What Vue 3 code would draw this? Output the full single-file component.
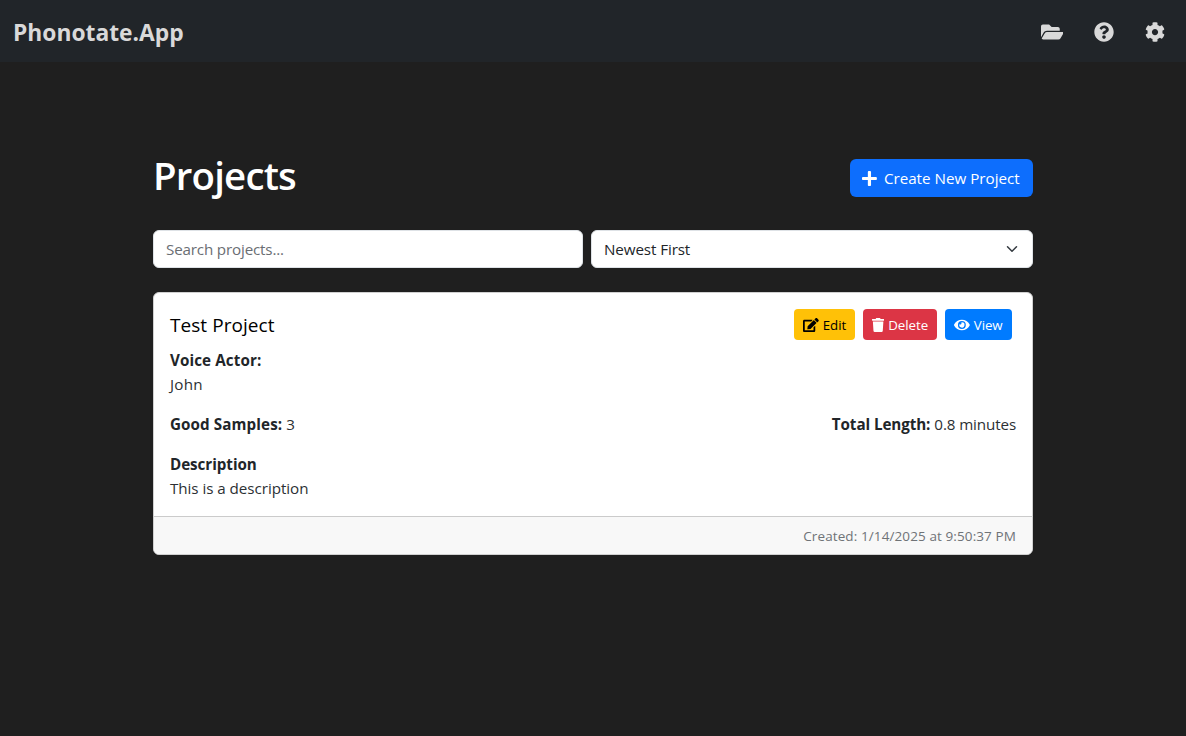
<script setup>
import { ref } from 'vue'

const query = ref('')
const icons = {
  folder: { w: 576, d: 'M572.694 292.093L500.27 416.248A63.997 63.997 0 0 1 444.989 448H45.025c-18.523 0-30.064-20.093-20.731-36.093l72.424-124.155A64 64 0 0 1 152 256h399.964c18.523 0 30.064 20.093 20.73 36.093zM152 224h328v-48c0-26.51-21.49-48-48-48H272l-64-64H48C21.49 64 0 85.49 0 112v278.046l69.077-118.418C86.214 242.25 117.989 224 152 224z' },
  help: { w: 512, d: 'M504 256c0 136.997-111.043 248-248 248S8 392.997 8 256C8 119.083 119.043 8 256 8s248 111.083 248 248zM262.655 90c-54.497 0-89.255 22.957-116.549 63.758-3.536 5.286-2.353 12.415 2.715 16.258l34.699 26.31c5.205 3.947 12.621 3.008 16.665-2.122 17.864-22.658 30.113-35.797 57.303-35.797 20.429 0 45.698 13.148 45.698 32.958 0 14.976-12.363 22.667-32.534 33.976C247.128 238.528 216 254.941 216 296v4c0 6.627 5.373 12 12 12h56c6.627 0 12-5.373 12-12v-1.333c0-28.462 83.186-29.647 83.186-106.667 0-58.002-60.165-102-116.531-102zM256 338c-25.365 0-46 20.635-46 46 0 25.364 20.635 46 46 46s46-20.636 46-46c0-25.365-20.635-46-46-46z' },
  gear: { w: 512, d: 'M487.4 315.7l-42.6-24.6c4.3-23.2 4.3-47 0-70.2l42.6-24.6c4.9-2.8 7.1-8.6 5.5-14-11.1-35.6-30-67.8-54.7-94.6-3.8-4.1-10-5.1-14.8-2.3L380.8 110c-17.9-15.4-38.5-27.3-60.8-35.1V25.800c0-5.600-3.900-10.500-9.400-11.700-36.700-8.200-74.300-7.800-109.200 0-5.500 1.200-9.400 6.100-9.400 11.700V75c-22.200 7.900-42.800 19.800-60.800 35.100L88.700 85.500c-4.900-2.800-11-1.900-14.800 2.300-24.700 26.700-43.600 58.900-54.700 94.600-1.700 5.400.6 11.200 5.500 14L67.300 221c-4.300 23.200-4.300 47 0 70.200l-42.600 24.600c-4.900 2.800-7.100 8.600-5.500 14 11.100 35.600 30 67.800 54.700 94.600 3.800 4.100 10 5.100 14.800 2.300l42.600-24.600c17.900 15.400 38.500 27.300 60.800 35.100v49.200c0 5.600 3.900 10.500 9.400 11.700 36.700 8.200 74.300 7.800 109.200 0 5.500-1.200 9.400-6.100 9.400-11.700v-49.200c22.200-7.900 42.800-19.800 60.800-35.100l42.600 24.600c4.900 2.800 11 1.900 14.800-2.300 24.700-26.700 43.600-58.900 54.700-94.600 1.500-5.500-.7-11.300-5.600-14.100zM256 336c-44.100 0-80-35.900-80-80s35.900-80 80-80 80 35.900 80 80-35.900 80-80 80z' },
  plus: { w: 448, d: 'M416 208H272V64c0-17.670-14.330-32-32-32h-32c-17.670 0-32 14.330-32 32v144H32c-17.670 0-32 14.330-32 32v32c0 17.670 14.330 32 32 32h144v144c0 17.670 14.330 32 32 32h32c17.670 0 32-14.330 32-32V304h144c17.670 0 32-14.330 32-32v-32c0-17.670-14.330-32-32-32z' },
  edit: { w: 576, d: 'M402.600 83.200l90.200 90.200c3.800 3.800 3.800 10 0 13.800L274.400 405.600l-92.800 10.300c-12.400 1.400-22.900-9.100-21.500-21.500l10.300-92.800L388.800 83.200c3.800-3.800 10-3.800 13.800 0zm162-22.900l-48.800-48.800c-15.200-15.200-39.900-15.200-55.200 0l-35.400 35.400c-3.800 3.800-3.800 10 0 13.800l90.200 90.200c3.800 3.800 10 3.800 13.800 0l35.400-35.400c15.200-15.300 15.200-40 0-55.200zM384 346.200V448H64V128h229.800c3.200 0 6.200-1.300 8.500-3.500l40-40c7.600-7.600 2.200-20.500-8.500-20.500H48C21.500 64 0 85.500 0 112v352c0 26.500 21.500 48 48 48h352c26.500 0 48-21.500 48-48V306.200c0-10.700-12.900-16-20.500-8.500l-40 40c-2.200 2.300-3.500 5.300-3.500 8.500z' },
  trash: { w: 448, d: 'M432 32H312l-9.400-18.700A24 24 0 0 0 281.100 0H166.800a23.720 23.720 0 0 0-21.400 13.300L136 32H16A16 16 0 0 0 0 48v32a16 16 0 0 0 16 16h416a16 16 0 0 0 16-16V48a16 16 0 0 0-16-16zM53.200 467a48 48 0 0 0 47.900 45h245.800a48 48 0 0 0 47.900-45L416 128H32z' },
  eye: { w: 576, d: 'M572.520 241.400C518.290 135.590 410.930 64 288 64S57.680 135.640 3.480 241.410a32.350 32.350 0 0 0 0 29.190C57.710 376.410 165.070 448 288 448s230.320-71.640 284.520-177.410a32.350 32.350 0 0 0 0-29.190zM288 400a144 144 0 1 1 144-144 143.930 143.930 0 0 1-144 144zm0-240a95.310 95.310 0 0 0-25.310 3.790 47.850 47.850 0 0 1-66.900 66.900A95.780 95.780 0 1 0 288 160z' },
}
const nav = ['folder', 'help', 'gear']
const actions = [
  { label: 'Edit', icon: 'edit' },
  { label: 'Delete', icon: 'trash' },
  { label: 'View', icon: 'eye' },
]
const project = {
  name: 'Test Project', actor: 'John', samples: 3, minutes: '0.8',
  description: 'This is a description', created: '1/14/2025 at 9:50:37 PM',
}
</script>

<template>
  <div class="page">
    <header class="navbar">
      <a class="brand"><span>Phonotate.App</span></a>
      <nav class="nav">
        <a v-for="n in nav" :key="n" :class="['nav-link', n]">
          <svg :viewBox="`0 0 ${icons[n].w} 512`"><path :d="icons[n].d" /></svg>
        </a>
      </nav>
    </header>
    <main class="container">
      <div class="heading">
        <h1>Projects</h1>
        <button class="create">
          <svg viewBox="0 0 448 512"><path :d="icons.plus.d" /></svg>
          <span>Create New Project</span>
        </button>
      </div>
      <div class="filters">
        <input v-model="query" class="search" placeholder="Search projects..." />
        <div class="select">
          <span>Newest First</span>
          <svg viewBox="0 0 16 16"><path d="m2 5 6 6 6-6" /></svg>
        </div>
      </div>
      <article class="card">
        <div class="card-body">
          <div class="card-top">
            <h5>{{ project.name }}</h5>
            <div class="actions">
              <button v-for="a in actions" :key="a.label" :class="['btn', a.icon]">
                <svg :viewBox="`0 0 ${icons[a.icon].w} 512`"><path :d="icons[a.icon].d" /></svg>
                <span>{{ a.label }}</span>
              </button>
            </div>
          </div>
          <p><b>Voice Actor:</b><br /><span class="actor">{{ project.actor }}</span></p>
          <div class="stats">
            <p><b>Good Samples:</b> <span>{{ project.samples }}</span></p>
            <p><b class="length">Total Length:</b> <span class="minutes">{{ project.minutes }} minutes</span></p>
          </div>
          <p><b class="desc">Description</b><br /><span class="about">{{ project.description }}</span></p>
        </div>
        <footer><span>Created: {{ project.created }}</span></footer>
      </article>
    </main>
  </div>
</template>

<style>
body { margin: 0; background: #1f1f1f; }
</style>

<style scoped>
* { box-sizing: border-box; }
.page {
  height: 736px;
  overflow: hidden;
  background: #1f1f1f;
  color: #212529;
  font: 400 15.2px/24px "Open Sans", "Noto Sans", sans-serif;
}
svg { display: block; fill: currentColor; flex: none; }
h1, h5, p { margin: 0; }
button { border: 0; font: inherit; display: flex; align-items: center; white-space: nowrap; }
.navbar {
  height: 62px;
  display: flex;
  align-items: center;
  justify-content: space-between;
  padding: 2px 21px 0 13px;
  background: #212529;
  color: #d9d9d9;
}
.brand { padding-top: 2px; font-size: 22.8px; line-height: 36px; font-weight: 700; }
.nav { display: flex; align-items: center; }
.nav-link svg { height: 20px; }
.folder { margin-right: 31px; }
.help { margin-right: 31px; }
.container { width: 880px; margin: 0 auto; padding-top: 91px; }
.heading { display: flex; justify-content: space-between; height: 77px; }
h1 { color: #fff; font-size: 38.4px; line-height: 44px; font-weight: 600; letter-spacing: -0.8px; }
.create {
  width: 183px;
  height: 38px;
  margin-top: 6px;
  padding: 0 0 0 12px;
  border-radius: 6px;
  background: #0d6efd;
  color: #fff;
}
.create svg { height: 17px; margin-right: 7px; }
.filters { display: grid; grid-template-columns: 430px 442px; gap: 8px; height: 38px; }
.search, .select {
  height: 38px;
  border: 1px solid #dee2e6;
  border-radius: 6px;
  background: #fff;
  font: inherit;
  padding: 0 12px;
  color: #212529;
}
.search { letter-spacing: -0.17px; }
.search::placeholder { color: #6a6e73; opacity: 1; }
.select { display: flex; align-items: center; justify-content: space-between; letter-spacing: -0.1px; }
.select svg { width: 16px; height: 12px; fill: none; stroke: #343a40; stroke-width: 2; stroke-linecap: round; stroke-linejoin: round; }
.card { margin-top: 24px; border: 1px solid #d0d0d0; border-radius: 6px; background: #fff; overflow: hidden; height: 263px; }
.card-body { padding: 16px; height: 223px; }
.card-top { display: flex; justify-content: space-between; height: 39px; }
h5 { color: #000; font-size: 19px; line-height: 33px; font-weight: 500; letter-spacing: 0.05px; }
.actions { display: flex; gap: 8px; padding-right: 4px; }
.btn { height: 31px; padding: 0 0 0 9px; border-radius: 4px; font-size: 13.3px; color: #fff; }
.btn svg { height: 14px; }
.btn.edit { width: 61px; background: #ffc107; color: #000; }
.btn.trash { width: 74px; background: #dc3545; }
.btn.eye { width: 67px; background: #007bff; }
.btn span { margin-left: 4px; letter-spacing: -0.05px; }
p { margin-bottom: 16px; color: #2c3034; }
b { color: #212529; font-weight: 700; letter-spacing: 0.1px; }
.desc { letter-spacing: -0.05px; }
.length { letter-spacing: -0.08px; }
.minutes { letter-spacing: -0.12px; }
.about { letter-spacing: -0.05px; }
.actor { letter-spacing: 0.25px; }
.stats { display: flex; justify-content: space-between; }
footer {
  height: 39px;
  padding: 0 16px;
  border-top: 1px solid #cbcbcb;
  background: #f8f8f8;
  color: #6f7377;
  font-size: 13.5px;
  letter-spacing: 0.1px;
  line-height: 38px;
  text-align: right;
}
</style>
